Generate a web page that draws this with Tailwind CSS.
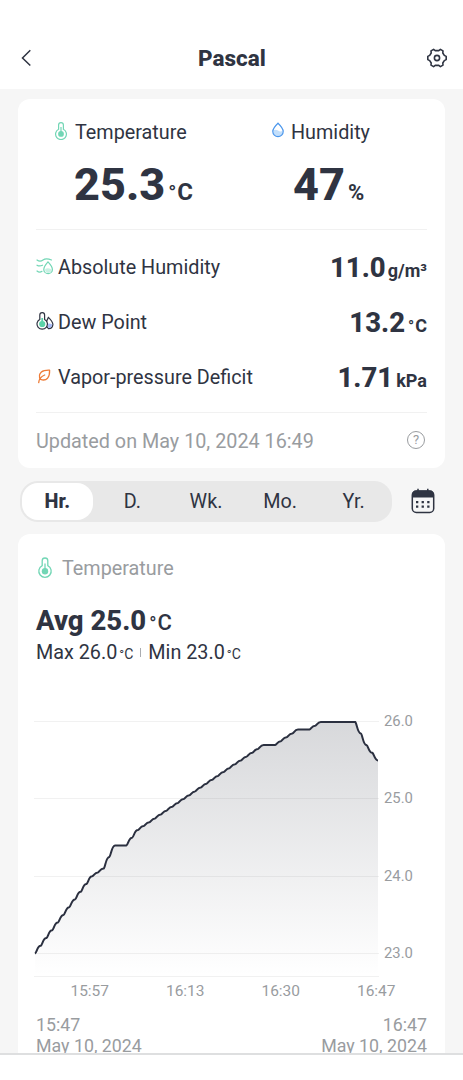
<!DOCTYPE html>
<html lang="en">
<head>
    <meta charset="UTF-8">
    <meta name="viewport" content="width=device-width, initial-scale=1.0">
    <title>Pascal</title>
    <script src="https://cdn.jsdelivr.net/npm/@tailwindcss/browser@4"></script>
</head>
<body class="bg-white text-[#2f3442] font-['Roboto',sans-serif]">
    <div class="flex flex-col h-[1080px] overflow-hidden">
        <!-- Top bar -->
        <header class="flex items-center justify-between h-[89px] shrink-0 pt-[27px] pl-5 pr-4 bg-white">
            <svg class="w-5 h-5" viewBox="0 0 20 20" fill="none" stroke="currentColor" stroke-width="1.5">
                <path d="M10.3 2.3L2.5 10l7.8 7.5" />
            </svg>
            <h1 class="text-[22.5px] leading-7 font-extrabold mr-[3px]">Pascal</h1>
            <svg class="w-5 h-5" viewBox="0 0 20 20" fill="none" stroke="currentColor" stroke-width="1.6" stroke-linejoin="round">
                <path d="M6.6 1.4L8.2 2.6H11.8L13.4 1.4L16 2.9L15.8 5L17.3 7.4L19.2 8.4V11.6L17.3 12.6L15.8 15L16 17.1L13.4 18.6L11.8 17.4H8.2L6.6 18.6L4 17.1L4.2 15L2.7 12.6L.8 11.6V8.4L2.7 7.4L4.2 5L4 2.9z" />
                <circle cx="10" cy="10" r="2.6" />
            </svg>
        </header>

        <main class="h-[964px] shrink-0 overflow-hidden bg-[#f6f6f6] pt-[10px] px-[18px]">
            <!-- Current readings -->
            <section class="h-[369px] bg-white rounded-xl px-[18px]">
                <div class="flex h-[131px] pt-[21px] border-b border-[#f1f1f1]">
                    <div class="flex w-[218px] pl-[18px]">
                        <svg class="w-[14px] h-[18px] mt-[2px] mr-[7px]" viewBox="0 0 14 18" fill="none" stroke="#72d6b5" stroke-width="1.2">
                            <path d="M4.6 7.3V3a2.4 2.4 0 014.8 0v4.3a5.4 5.4 0 11-4.8 0z" />
                            <circle cx="7" cy="11.9" r="2.9" fill="#72d6b5" stroke="none" />
                            <path d="M7 5v7" />
                        </svg>
                        <div>
                            <div class="text-[19.8px] leading-[26px]">Temperature</div>
                            <div class="flex items-baseline mt-[15px] -ml-px font-extrabold">
                                <span class="text-[45px] leading-[48px]">25.3</span>
                                <span class="text-[24px] ml-[3px] font-bold"><span class="text-[21px] font-semibold mr-px">°</span>C</span>
                            </div>
                        </div>
                    </div>
                    <div class="flex pl-[17px]">
                        <svg class="w-[14px] h-[18px] mt-px mr-[6px]" viewBox="0 0 14 18" fill="none" stroke="#4a96ec" stroke-width="1.2">
                            <path d="M2.2 9.5Q4.7 7.8 7 9.5T11.8 9.7Q12 15 7 15.2Q2 14.5 2.2 9.5z" fill="#c3dffb" stroke="none" />
                            <path d="M7 2.2Q12.2 7.2 12.2 10.4a5.2 5.2 0 01-10.4 0Q1.8 7.2 7 2.2z" />
                        </svg>
                        <div>
                            <div class="text-[19.8px] leading-[26px]">Humidity</div>
                            <div class="flex items-baseline mt-[15px] ml-[2px] font-extrabold">
                                <span class="text-[45px] leading-[48px]">47</span>
                                <span class="text-[22px] ml-[3px] font-bold">%</span>
                            </div>
                        </div>
                    </div>
                </div>

                <div class="h-[183px] pt-[9px] border-b border-[#f1f1f1]">
                    <div class="flex items-center h-[55px]">
                        <svg class="w-[18px] h-[18px] mr-1 mb-px" viewBox="0 0 18 18" fill="none" stroke="#72d6b5" stroke-width="1.2" stroke-linecap="round">
                            <path d="M1 3Q4 5.2 7 3T15.5 3M1 8.2Q3.5 9.7 6.5 8.2M1 14Q3.5 16 6 14.3" />
                            <path d="M9.2 12Q12 10.5 15.5 12.4Q15.5 15.7 12 16Q8.7 15.5 9.2 12z" fill="#caf1e4" stroke="none" />
                            <path d="M12 4.9Q16.4 9.6 16.4 12.4a4.3 4.3 0 01-8.6 0Q7.8 9.6 12 4.9z" />
                        </svg>
                        <span class="text-[19.8px] mt-[2px]">Absolute Humidity</span>
                        <span class="flex items-baseline ml-auto mt-[2px] font-extrabold"><span class="text-[27.5px]">11.0</span><span class="text-[18px] ml-[2px] font-bold">g/m³</span></span>
                    </div>
                    <div class="flex items-center h-[55px]">
                        <svg class="w-[18px] h-[18px] mr-1 mb-px" viewBox="0 0 18 18" fill="none" stroke="#2f3442" stroke-width="1.2">
                            <path d="M12.4 5.4Q16.9 9.8 16.9 12.6Q16.4 16.7 12.4 16.6Q8 13 12.4 5.4z" fill="#fff" />
                            <path d="M11 12Q13.5 10.8 16.2 12.6Q16 16 12.4 16z" fill="#a9bcf7" stroke="none" />
                            <path d="M3.8 7.4V3a2.4 2.4 0 014.8 0v4.4a5.2 5.2 0 11-4.8 0z" fill="#fff" />
                            <circle cx="6.2" cy="12" r="3.1" fill="#5bd3a9" stroke="none" />
                            <path d="M6.2 6v6" stroke="#5bd3a9" stroke-width="1.8" />
                        </svg>
                        <span class="text-[19.8px] mt-[2px]">Dew Point</span>
                        <span class="flex items-baseline ml-auto mt-[2px] font-extrabold"><span class="text-[27.5px]">13.2</span><span class="text-[18px] ml-[3px] font-bold"><span class="text-[16px] font-semibold mr-px">°</span>C</span></span>
                    </div>
                    <div class="flex items-center h-[55px]">
                        <svg class="w-[18px] h-[18px] mr-1" viewBox="0 0 18 18" fill="none" stroke="#ee7b36" stroke-width="1.3" stroke-linecap="round" stroke-linejoin="round">
                            <path d="M4.6 11.4Q1.8 7.2 5.4 3.9Q7.8 2 13.6 2.2Q13.8 7.4 11.6 10.2Q9 13 4.6 11.4z" />
                            <path d="M2.7 14.6Q3 9.5 8.7 7" />
                        </svg>
                        <span class="text-[19.8px] mt-[2px]">Vapor-pressure Deficit</span>
                        <span class="flex items-baseline ml-auto mt-[2px] font-extrabold"><span class="text-[27.5px]">1.71</span><span class="text-[18px] ml-[3px] font-bold">kPa</span></span>
                    </div>
                </div>

                <div class="flex items-center justify-between h-[55px] text-[#999c9f]">
                    <span class="text-[19.8px] mt-[2px]">Updated on May 10, 2024 16:49</span>
                    <span class="flex items-center justify-center w-[18px] h-[18px] mr-[2px] -mt-[2px] rounded-full border border-[#999c9f] text-[13px]">?</span>
                </div>
            </section>

            <!-- Period tabs -->
            <div class="flex items-center h-[66px] pl-[2px]">
                <nav class="flex items-center w-[372px] h-[41px] p-[2px] rounded-[18px] bg-[#e8e8e8] text-[19.8px]">
                    <a class="flex items-center justify-center w-[71px] h-[37px] pt-[2px] mr-[3px] rounded-2xl bg-white font-extrabold">Hr.</a>
                    <a class="w-[74px] text-center mt-[2px]">D.</a>
                    <a class="w-[74px] text-center mt-[2px]">Wk.</a>
                    <a class="w-[75px] text-center mt-[2px]">Mo.</a>
                    <a class="w-[73px] text-center mt-[2px]">Yr.</a>
                </nav>
                <svg class="w-6 h-[26px] ml-[19px] mb-px" viewBox="0 0 24 26" fill="none" stroke="currentColor" stroke-width="1.5">
                    <rect x="1.3" y="3" width="21.4" height="21.5" rx="4" />
                    <path d="M1 9.5V7q0-4.5 4.500-4.5h13Q23 2.5 23 7v2.5z" fill="currentColor" stroke="none" />
                    <path d="M7 .8v3M16.8.8v3" />
                    <path d="M5 14.2h2.3M10.6 14.2h2.3M16.2 14.2h2.3M5 18.7h2.3M10.6 18.7h2.3M16.2 18.7h2.3" stroke-width="2.3" />
                </svg>
            </div>

            <!-- Temperature history -->
            <section class="h-[540px] bg-white rounded-t-xl px-[18px] pt-[21px]">
                <div class="flex items-center h-[26px] text-[19.8px] text-[#999c9f]">
                    <svg class="w-[16px] h-[22px] ml-px mr-[9px]" viewBox="0 0 16 22" fill="none" stroke="#72d6b5" stroke-width="1.3">
                        <path d="M5.2 8.6V3.8a2.8 2.8 0 015.6 0v4.8a6.2 6.2 0 11-5.6 0z" />
                        <circle cx="8" cy="14.2" r="3.2" fill="#72d6b5" stroke="none" />
                        <path d="M8 6.5v8" />
                    </svg>
                    <span class="mt-[2px]">Temperature</span>
                </div>
                <div class="flex items-baseline mt-[24px] mb-px h-8 leading-8 font-extrabold">
                    <span class="text-[27.5px]">Avg 25.0</span>
                    <span class="text-[22px] font-medium ml-[3px]"><span class="text-[19px] mr-px">°</span>C</span>
                </div>
                <div class="flex items-baseline h-[29px] leading-[29px] text-[19.8px]">
                    Max 26.0<span class="text-[14px] ml-[2px]"><span class="text-[13px]">°</span>C</span>
                    <span class="w-px h-[9px] mx-[7px] self-center bg-[#aaacb0]"></span>
                    Min 23.0<span class="text-[14px] ml-[2px]"><span class="text-[13px]">°</span>C</span>
                </div>

                <div class="flex mt-[42px] -ml-[2px]">
                    <svg class="w-[346px] h-[270px] shrink-0" viewBox="34 709 346 270" fill="none">
                        <defs>
                            <linearGradient id="fade" x1="0" y1="722" x2="0" y2="976" gradientUnits="userSpaceOnUse">
                                <stop offset="0" stop-color="#2f3442" stop-opacity=".19" />
                                <stop offset="1" stop-color="#2f3442" stop-opacity="0" />
                            </linearGradient>
                        </defs>
                        <path d="M34 721.5H379M34 798.5H379M34 876.5H379M34 953.5H379M34 976.5H379" stroke="#f1f1f1" />
                        <path id="area" fill="url(#fade)" />
                        <path id="line" stroke="#2b3040" stroke-width="2" stroke-linejoin="round" />
                    </svg>
                    <div class="flex flex-col justify-between h-[256px] ml-[4px] text-[14.8px] leading-6 text-[#999c9f]">
                        <span>26.0</span>
                        <span>25.0</span>
                        <span>24.0</span>
                        <span>23.0</span>
                    </div>
                </div>
                <div class="flex ml-[6px] w-[382px] text-[15.5px] leading-6 text-center text-[#999c9f]">
                    <span class="w-[95.5px]">15:57</span>
                    <span class="w-[95.5px]">16:13</span>
                    <span class="w-[95.5px]">16:30</span>
                    <span class="w-[95.5px]">16:47</span>
                </div>
                <div class="flex justify-between mt-[11px] text-[17.8px] leading-[21px] text-[#999c9f]">
                    <div>15:47<br>May 10, 2024</div>
                    <div class="text-right">16:47<br>May 10, 2024</div>
                </div>
            </section>
        </main>
        <footer class="grow border-t-2 border-[#dedfe0] bg-white"></footer>
    </div>

    <script>
        // one reading per minute, as [minute, value] where the slope changes
        const knots = [[0, 23], [10, 24], [12, 24.1], [14, 24.4], [16, 24.4], [18, 24.6], [40, 25.7], [42, 25.7],
            [46, 25.9], [48, 25.9], [50, 26], [56, 26], [58, 25.7], [60, 25.5]];
        const step = 343 / 60;
        const toY = v => 953.5 - (v - 23) * 77.2;
        let x = 35, y = toY(23), d = `M${x} ${y}`;
        for (let k = 1; k < knots.length; k++) {
            const [m0, v0] = knots[k - 1], [m1, v1] = knots[k];
            for (let m = m0 + 1; m <= m1; m++) {
                const ny = toY(v0 + (v1 - v0) * (m - m0) / (m1 - m0));
                d += `C${x + step * 0.3} ${y + (ny - y) * 0.1} ${x + step * 0.4} ${ny} ${x + step} ${ny}`;
                x += step;
                y = ny;
            }
        }
        document.getElementById('line').setAttribute('d', d);
        document.getElementById('area').setAttribute('d', d + 'V976H35Z');
    </script>
</body>
</html>
